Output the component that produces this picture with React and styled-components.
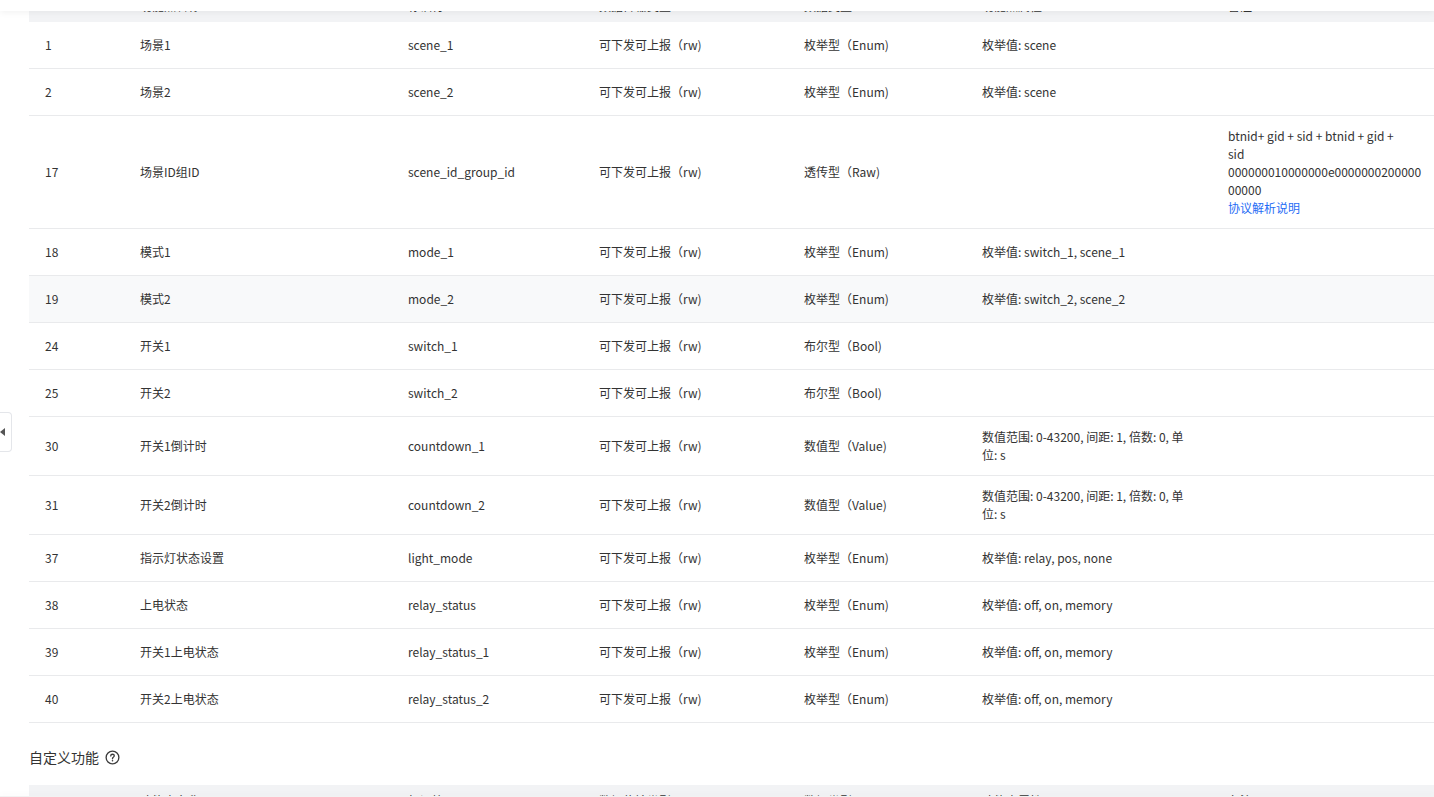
import React from "react";
import styled, { createGlobalStyle } from "styled-components";

const GlobalStyle = createGlobalStyle`
  html, body {
    margin: 0;
    padding: 0;
    background: #fff;
    overflow: hidden;
  }
  body {
    font-family: "Noto Sans CJK SC", "Noto Sans", sans-serif;
    font-size: 12px;
    color: #333;
  }
`;

const COLS = "95px 268px 191px 205px 178px 246px 1fr";

const headers = ["DP ID", "功能点名称", "标识符", "数据传输类型", "数据类型", "功能点属性", "备注"];

const rows = [
  { id: 1, name: "场景1", code: "scene_1", mode: "可下发可上报（rw)", type: "枚举型（Enum)", attr: "枚举值: scene" },
  { id: 2, name: "场景2", code: "scene_2", mode: "可下发可上报（rw)", type: "枚举型（Enum)", attr: "枚举值: scene" },
  {
    id: 17,
    name: "场景ID组ID",
    code: "scene_id_group_id",
    mode: "可下发可上报（rw)",
    type: "透传型（Raw)",
    attr: "",
    note: ["btnid+ gid + sid + btnid + gid +", "sid", "000000010000000e0000000200000", "00000"],
    link: "协议解析说明",
  },
  { id: 18, name: "模式1", code: "mode_1", mode: "可下发可上报（rw)", type: "枚举型（Enum)", attr: "枚举值: switch_1, scene_1" },
  { id: 19, name: "模式2", code: "mode_2", mode: "可下发可上报（rw)", type: "枚举型（Enum)", attr: "枚举值: switch_2, scene_2", hover: true },
  { id: 24, name: "开关1", code: "switch_1", mode: "可下发可上报（rw)", type: "布尔型（Bool)", attr: "" },
  { id: 25, name: "开关2", code: "switch_2", mode: "可下发可上报（rw)", type: "布尔型（Bool)", attr: "" },
  { id: 30, name: "开关1倒计时", code: "countdown_1", mode: "可下发可上报（rw)", type: "数值型（Value)", attr: "数值范围: 0-43200, 间距: 1, 倍数: 0, 单位: s" },
  { id: 31, name: "开关2倒计时", code: "countdown_2", mode: "可下发可上报（rw)", type: "数值型（Value)", attr: "数值范围: 0-43200, 间距: 1, 倍数: 0, 单位: s" },
  { id: 37, name: "指示灯状态设置", code: "light_mode", mode: "可下发可上报（rw)", type: "枚举型（Enum)", attr: "枚举值: relay, pos, none" },
  { id: 38, name: "上电状态", code: "relay_status", mode: "可下发可上报（rw)", type: "枚举型（Enum)", attr: "枚举值: off, on, memory" },
  { id: 39, name: "开关1上电状态", code: "relay_status_1", mode: "可下发可上报（rw)", type: "枚举型（Enum)", attr: "枚举值: off, on, memory" },
  { id: 40, name: "开关2上电状态", code: "relay_status_2", mode: "可下发可上报（rw)", type: "枚举型（Enum)", attr: "枚举值: off, on, memory" },
];

const App = () => {
  return (
    <>
      <GlobalStyle />
      <TopBar />
      <Page>
        <Table>
          <HeadRow>
            {headers.map((h) => (
              <HeadCell key={h}>{h}</HeadCell>
            ))}
          </HeadRow>
          {rows.map((r) => (
            <Row key={r.id} $hover={r.hover}>
              <Cell>{r.id}</Cell>
              <Cell>{r.name}</Cell>
              <Cell>{r.code}</Cell>
              <Cell>{r.mode}</Cell>
              <Cell>{r.type}</Cell>
              <Cell>{r.attr}</Cell>
              <Cell>
                {r.note && r.note.map((line, i) => <NoteLine key={i}>{line}</NoteLine>)}
                {r.link && <Link>{r.link}</Link>}
              </Cell>
            </Row>
          ))}
        </Table>

        <SectionTitle>
          自定义功能
          <svg width="15" height="15" viewBox="0 0 16 16" fill="none">
            <circle cx="8" cy="8" r="6.8" stroke="#3a3a3a" strokeWidth="1.4" />
            <path
              d="M6.1 6.3c0-1.1.9-1.8 1.9-1.8s1.9.7 1.9 1.7c0 .8-.5 1.2-1.1 1.6-.5.3-.8.6-.8 1.2v.4"
              stroke="#3a3a3a"
              strokeWidth="1.4"
              strokeLinecap="round"
            />
            <circle cx="8" cy="11.4" r=".85" fill="#3a3a3a" />
          </svg>
        </SectionTitle>

        <Table>
          <HeadRow>
            {headers.map((h) => (
              <HeadCell key={h}>{h}</HeadCell>
            ))}
          </HeadRow>
        </Table>
      </Page>
      <BottomBar />
      <CollapseTab>
        <svg width="5" height="8" viewBox="0 0 5 8">
          <path d="M5 0 L0 4 L5 8 Z" fill="#555" />
        </svg>
      </CollapseTab>
    </>
  );
};

const TopBar = styled.div`
  position: fixed;
  top: 0;
  left: 0;
  right: 0;
  height: 11px;
  background: #fff;
  box-shadow: 0 2px 6px rgba(0, 0, 0, 0.05);
  z-index: 5;
`;

const BottomBar = styled.div`
  position: fixed;
  bottom: 0;
  left: 0;
  right: 0;
  height: 1px;
  background: #f2f2f2;
  box-shadow: 0 -2px 5px rgba(0, 0, 0, 0.06);
  z-index: 5;
`;

const CollapseTab = styled.div`
  position: fixed;
  left: 0;
  top: 412px;
  width: 12px;
  height: 40px;
  box-sizing: border-box;
  background: #fff;
  border: 1px solid #e4e6ea;
  border-left: none;
  border-radius: 0 4px 4px 0;
  display: flex;
  align-items: center;
  justify-content: flex-start;
  z-index: 6;
`;

const Page = styled.div`
  margin-top: -10px;
  padding-left: 29px;
`;

const Table = styled.div`
  display: flex;
  flex-direction: column;
`;

const HeadRow = styled.div`
  display: grid;
  grid-template-columns: ${COLS};
  height: 32px;
  align-items: center;
  background: #f2f3f5;
`;

const HeadCell = styled.div`
  padding: 0 16px;
  color: #333;
  line-height: 18px;
  white-space: nowrap;
`;

const Row = styled.div`
  display: grid;
  grid-template-columns: ${COLS};
  min-height: 46px;
  align-items: center;
  border-bottom: 1px solid #e9eaec;
  background: ${(p) => (p.$hover ? "#f8f9fa" : "#fff")};
`;

const Cell = styled.div`
  padding: 11px 16px;
  line-height: 18px;
  color: #333;
`;

const NoteLine = styled.div`
  white-space: nowrap;
`;

const Link = styled.div`
  color: #1f6cf5;
  cursor: pointer;
`;

const SectionTitle = styled.div`
  display: flex;
  align-items: center;
  gap: 6px;
  font-size: 14px;
  line-height: 22px;
  color: #333;
  margin: 23px 0 17px;
`;

export default App;
